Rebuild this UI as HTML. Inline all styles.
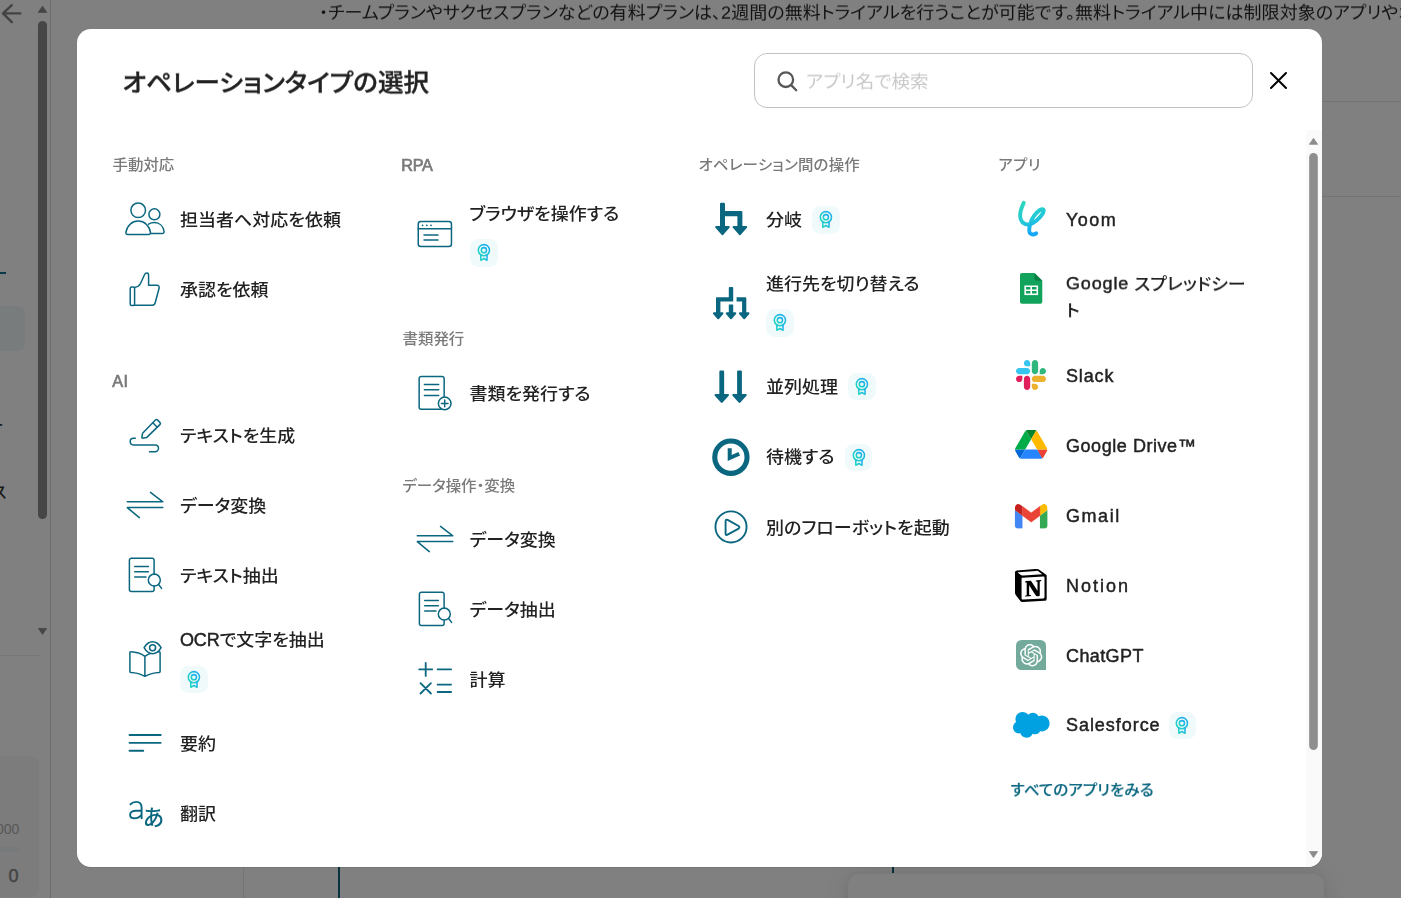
<!DOCTYPE html>
<html lang="ja">
<head>
<meta charset="utf-8">
<title>オペレーションタイプの選択</title>
<style>
*{box-sizing:border-box;margin:0;padding:0}
html,body{width:1401px;height:898px;overflow:hidden}
body{position:relative;background:#808080;font-family:"Liberation Sans","Noto Sans CJK JP",sans-serif;font-feature-settings:"palt";color:#222}
.abs{position:absolute}
svg{display:block;overflow:visible;position:absolute}
/* ---------- dimmed background page ---------- */
#topwrap{left:0;top:0;width:0;height:0;will-change:transform}
#toptext{left:319px;top:-1px;transform:scaleY(.94);transform-origin:50% 50%;white-space:nowrap;font-size:18px;letter-spacing:.05px;line-height:28px;color:#111}
.vline{width:1px;background:#6a6a6a}
.hline{height:1px;background:#747474}
/* ---------- modal ---------- */
#modal{left:77px;top:29px;width:1245px;height:837.5px;background:#fff;border-radius:14px;box-shadow:0 1px 1px rgba(0,0,0,.08);overflow:hidden}
#title{position:absolute;left:122.500px;top:62.500px;font-size:25.600px;line-height:40px;font-weight:500;color:#222;white-space:nowrap;-webkit-text-stroke:.35px #222;transform:scaleY(.95);transform-origin:50% 52%}
#search{left:677px;top:24px;width:499px;height:54.5px;border:1px solid #c2c2c2;border-radius:13px;background:#fff}
#ph{position:absolute;left:806px;top:67.600px;transform:scaleY(.95);transform-origin:50% 52%;font-size:18.500px;line-height:28px;letter-spacing:.1px;color:#c8c8c8;white-space:nowrap}
.hd{position:absolute;margin-top:2px;transform:translateY(-.6px) scaleY(.935);transform-origin:50% 55%;font-size:15.45px;line-height:24px;font-weight:500;color:#7a7a7a;white-space:nowrap}
.it{position:absolute;margin:1.5px 0 0 -.5px;transform:translateY(-.5px) scaleY(.94);transform-origin:50% 14.500px;font-size:18px;line-height:28px;font-weight:500;color:#222;white-space:nowrap}
.la{-webkit-text-stroke:.45px #222;letter-spacing:.85px}
span.la{position:relative;top:-1px;display:inline-block;transform:scaleY(1.064);transform-origin:50% 60%}
div.it.la{margin-top:.5px;transform:none}
div.hd.la{transform:translateY(-1.400px);font-size:16.200px}
.ic{width:40px;height:40px}
.st{fill:none;stroke:#0b6780;stroke-width:1.5;stroke-linecap:round;stroke-linejoin:round}
.fl{fill:#0b6780;stroke:none}
.bd{position:absolute;width:27.500px;height:27.500px;border-radius:8.500px;background:#f0fafb;margin:.25px 0 0 .1px}
.bd svg{left:-.25px;top:-.25px;width:28px;height:28px}
</style>
</head>
<body>
<svg width="0" height="0" style="position:absolute"><defs>
<linearGradient id="rg" x1="0" y1="1" x2="1" y2="0"><stop offset="0" stop-color="#22d8bd"/><stop offset="1" stop-color="#1ea9f5"/></linearGradient>
<linearGradient id="yg" x1="0" y1="0" x2="0.3" y2="1"><stop offset="0" stop-color="#2dd6bd"/><stop offset=".62" stop-color="#22c8d8"/><stop offset="1" stop-color="#14a8f7"/></linearGradient>
</defs></svg>

<!-- background page (dimmed) -->
<div class="abs" id="topwrap"><div class="abs" id="toptext">・チームプランやサクセスプランなどの有料プランは、2週間の無料トライアルを行うことが可能です。無料トライアル中には制限対象のアプリやオペレーションを使用することができます。</div></div>
<div class="abs vline" style="left:50px;top:0;height:898px"></div>
<div class="abs hline" style="left:1322px;top:101px;width:79px"></div>
<div class="abs hline" style="left:1322px;top:196px;width:79px"></div>
<div class="abs hline" style="left:0;top:655px;width:39px;background:#767676"></div>
<div class="abs vline" style="left:243px;top:866px;height:32px;background:#747474"></div>
<div class="abs" style="left:338px;top:866px;width:2px;height:32px;background:#07323f"></div>
<div class="abs" style="left:891.5px;top:866px;width:2px;height:7px;background:#07323f"></div>
<div class="abs" style="left:847.500px;top:873.500px;width:476px;height:60px;border-radius:11px;background:#808080;box-shadow:0 0 26px rgba(0,0,0,.1),0 0 6px rgba(0,0,0,.04)"></div>
<!-- left sidebar fragments -->
<svg style="left:0;top:0" width="52" height="30" viewBox="0 0 52 30"><path d="M20.3 13.4H3M11.8 5.200L3 13.400L11.800 22.200" fill="none" stroke="#434343" stroke-width="2.400" stroke-linecap="round" stroke-linejoin="round"/><path d="M42.5 6.2L46.8 12.4H38.2Z" fill="#464646" stroke="#464646" stroke-width="0.8" stroke-linejoin="round"/></svg>
<div class="abs" style="left:38px;top:20.5px;width:9px;height:498.5px;border-radius:4.5px;background:#464646"></div>
<svg style="left:36px;top:624px" width="14" height="14" viewBox="0 0 14 14"><path d="M2.4 4.4H10.6L6.500 10.400Z" fill="#464646" stroke="#464646" stroke-width="0.8" stroke-linejoin="round"/></svg>
<div class="abs" style="left:0;top:272px;width:6px;height:2px;background:#0a3a48"></div>
<div class="abs" style="left:-10px;top:306px;width:35px;height:45px;border-radius:8px;background:#787c7d"></div>
<div class="abs" style="left:-12.500px;top:411.500px;font-size:16px;line-height:28px;color:#1a1a1a;font-weight:500">ー</div>
<div class="abs" style="left:-8px;top:478.700px;font-size:16px;line-height:28px;color:#1a1a1a;font-weight:500">ス</div>
<div class="abs" style="left:-10px;top:756px;width:48.500px;height:141px;border-radius:8px;background:#7c7c7c"></div>
<div class="abs" style="left:-4px;top:819px;font-size:14px;line-height:20px;color:#575757">000</div>
<div class="abs" style="left:-10px;top:847px;width:29px;height:5px;border-radius:2.5px;background:#767a7b"></div>
<div class="abs" style="left:8.500px;top:861.500px;font-size:18px;line-height:28px;color:#444;-webkit-text-stroke:.5px #444">0</div>

<!-- modal -->
<div class="abs" id="modal">
  <div class="abs" id="search">
    <svg style="left:20.500px;top:15.500px" width="24" height="24" viewBox="0 0 24 24"><circle cx="9.800" cy="9.700" r="7.300" fill="none" stroke="#585858" stroke-width="2.300"/><path d="M15.200 15.100L20.200 20.200" stroke="#585858" stroke-width="2.300" stroke-linecap="round"/></svg>
  </div>
  <svg style="left:1192.100px;top:41.900px" width="19" height="19" viewBox="0 0 19 19"><path d="M2 2L17 17M17 2L2 17" stroke="#000" stroke-width="2" stroke-linecap="round"/></svg>
  <!-- modal scrollbar -->
  <div class="abs" style="left:1229px;top:101px;width:16px;height:737px;background:#fafafa"></div>
  <svg style="left:1229px;top:101px" width="16" height="732" viewBox="0 0 16 732"><path d="M7.500 8.300L11.600 14.300H3.400Z" fill="#8c8c8c" stroke="#8c8c8c" stroke-width="0.800" stroke-linejoin="round"/><rect x="3.200" y="23" width="8.600" height="597" rx="4.300" fill="#8e8e8e"/><path d="M3.400 721.600H11.600L7.500 727.600Z" fill="#8c8c8c" stroke="#8c8c8c" stroke-width="0.800" stroke-linejoin="round"/></svg>

  <div class="abs" id="m" style="left:-77px;top:-29px;width:0;height:0;will-change:transform">
    <div id="title">オペレーションタイプの選択</div>
    <div id="ph">アプリ名で検索</div>
    <!-- ===== column 1 ===== -->
    <div class="hd" style="left:112.500px;top:152px">手動対応</div>

    <svg class="ic st" style="left:125px;top:199px" viewBox="0 0 40 40"><circle cx="13.200" cy="11.300" r="7.300"/><circle cx="29.400" cy="15.300" r="5.500"/><path d="M2.600 35.400C1.400 35.400.700 34.500.900 33.400C2 26.600 7 22.100 13.200 22.100C19.400 22.100 24.400 26.600 25.500 33.400C25.700 34.500 25 35.400 23.800 35.400Z"/><path d="M23.600 25.200C25.100 24.200 27 23.600 29.400 23.600C34.400 23.600 38.200 27 39 32.400C39.200 33.600 38.500 34.500 37.300 34.500H25.900"/></svg>
    <div class="it" style="left:180.500px;top:205px">担当者へ対応を依頼</div>

    <svg class="ic st" style="left:125px;top:269px" viewBox="0 0 40 40"><rect x="5.200" y="18.100" width="4.400" height="18.500" rx="1.500"/><path d="M9.600 18.500C12.500 18 14.500 16.500 15.500 14.500L19.600 5.500C20.200 4.200 21.200 4 22 4C23.300 4 23.600 5.200 23.600 6.500V16.200H32C33.600 16.200 34.500 17.600 34.100 19.200L30.200 33.800C29.800 35.300 28.800 36.200 27.300 36.200H9.600"/></svg>
    <div class="it" style="left:180.500px;top:275px">承認を依頼</div>

    <div class="hd la" style="left:112.200px;top:368px;letter-spacing:.6px;-webkit-text-stroke:.7px #7a7a7a">AI</div>

    <svg class="ic st" style="left:125px;top:415px" viewBox="0 0 40 40"><path d="M16.900 22L17.600 18.200L30.400 5.100Q31.500 4 32.600 5.100L34.900 7.400Q36 8.500 34.900 9.600L21.800 22.400L18 23.100Q16.700 23.300 16.900 22Z"/><path d="M27.800 7.700L32.300 12.200"/><path d="M10.300 23.300H8.500A3.300 3.300 0 0 0 8.500 29.900H30.100A3.400 3.400 0 0 1 30.100 36.700H24.500"/></svg>
    <div class="it" style="left:180.500px;top:421px">テキストを生成</div>

    <svg class="ic st" style="left:125px;top:485px" viewBox="0 0 40 40"><path d="M2.300 16.800H37.800L25.500 7.400M37.800 22.600H2.300L14.300 32.600"/></svg>
    <div class="it" style="left:180.500px;top:491px">データ変換</div>

    <svg class="ic st" style="left:125px;top:555px" viewBox="0 0 40 40"><path d="M29.100 19.500V5.200A2 2 0 0 0 27.100 3.200H6.400A2 2 0 0 0 4.400 5.200V34.400A2 2 0 0 0 6.400 36.400H27.100A2 2 0 0 0 29.100 34.400V31.200"/><path d="M9.700 11.400H23.400M9.700 16.700H23.400M9.700 22.100H21"/><circle cx="29.300" cy="25.100" r="6"/><path d="M33.600 29.500L36.600 33.400"/></svg>
    <div class="it" style="left:180.500px;top:561px">テキスト抽出</div>

    <svg class="ic st" style="left:125px;top:639px" viewBox="0 0 40 40"><path d="M19.900 17.300C16 14.500 10.500 13 5.700 12.800C5.200 12.800 4.900 13.100 4.900 13.600V32.600C4.900 33.100 5.200 33.400 5.700 33.400C10.500 33.600 16 35 19.900 37.300C24 35 29.500 33.600 34.300 33.400C34.800 33.400 35.100 33.100 35.100 32.600V13.600C35.100 13.100 34.800 12.800 34.300 12.800C29.500 13 24 14.500 19.900 17.300V37.300"/><path d="M19.100 8.700C21.500 4.500 24.500 2.700 27.600 2.700C30.700 2.700 33.700 4.500 36.100 8.700C33.700 12.900 30.700 14.700 27.600 14.700C24.500 14.700 21.500 12.900 19.100 8.700Z" fill="#fff"/><circle cx="27.600" cy="8.700" r="3"/></svg>
    <div class="it" style="left:180.500px;top:625px"><span class="la" style="letter-spacing:-.15px;top:0">OCR</span>で文字を抽出</div>
    <div class="bd" style="left:180px;top:665.500px"><svg viewBox="0 0 28 28"><g fill="none" stroke="url(#rg)" stroke-width="1.55" stroke-linejoin="round" stroke-linecap="round"><circle cx="13.9" cy="11.2" r="5.6"/><circle cx="13.9" cy="11.2" r="2.6"/><path d="M10.8 16.2V21.3L13.9 19.5L17 21.3V16.2"/></g></svg></div>

    <svg class="ic st" style="left:125px;top:723px;stroke-width:1.850" viewBox="0 0 40 40"><path d="M4.500 12H35.700M4.500 19.800H35.700M4.500 27.700H18.300"/></svg>
    <div class="it" style="left:180.500px;top:729px">要約</div>

    <svg class="ic st" style="left:125px;top:793px;stroke-width:1.900" viewBox="0 0 40 40"><path d="M5.400 11.400C6.800 9.800 8.900 8.900 11.300 8.900C14.900 8.900 16.600 11.200 16.600 14.800V25.300M16.600 17.700H11C7.500 17.700 5.100 19.100 5.100 21.700C5.100 24 6.900 25.300 9.500 25.300C12.500 25.300 15.100 23.800 16.600 21.500"/><text x="28.600" y="32" text-anchor="middle" font-size="21.500" font-weight="500" style="fill:#0b6780;stroke:none;font-family:'Liberation Sans','Noto Sans CJK JP',sans-serif">あ</text></svg>
    <div class="it" style="left:180.500px;top:799px">翻訳</div>

    <!-- ===== column 2 ===== -->
    <div class="hd la" style="left:401.300px;top:152px;letter-spacing:-.25px;-webkit-text-stroke:.7px #7a7a7a">RPA</div>

    <svg class="ic st" style="left:415px;top:213.750px" viewBox="0 0 40 40"><rect x="3.250" y="7.400" width="33.200" height="25.200" rx="2.500"/><path d="M3.250 14.650H36.450M9 21H23M9 26H23"/><g class="fl"><circle cx="7.600" cy="11.350" r=".900"/><circle cx="11.800" cy="11.350" r=".900"/><circle cx="16" cy="11.350" r=".900"/></g></svg>
    <div class="it" style="left:469.750px;top:199.750px">ブラウザを操作する</div>
    <div class="bd" style="left:470px;top:238.900px"><svg viewBox="0 0 28 28"><g fill="none" stroke="url(#rg)" stroke-width="1.55" stroke-linejoin="round" stroke-linecap="round"><circle cx="13.9" cy="11.2" r="5.6"/><circle cx="13.9" cy="11.2" r="2.6"/><path d="M10.8 16.2V21.3L13.9 19.5L17 21.3V16.2"/></g></svg></div>

    <div class="hd" style="left:402.500px;top:326px">書類発行</div>

    <svg class="ic st" style="left:415px;top:373px" viewBox="0 0 40 40"><path d="M29.150 23.800V5.450A2 2 0 0 0 27.150 3.450H6.150A2 2 0 0 0 4.150 5.450V34.350A2 2 0 0 0 6.150 36.350H26"/><path d="M9.400 11.500H23.700M9.400 16.850H23.700M9.400 22.400H23.700"/><circle cx="29.700" cy="30.400" r="6.300"/><path d="M26.400 30.400H33M29.700 27.100V33.700"/></svg>
    <div class="it" style="left:470px;top:379px">書類を発行する</div>

    <div class="hd" style="left:402.500px;top:473px">データ操作・変換</div>

    <svg class="ic st" style="left:415px;top:519px" viewBox="0 0 40 40"><path d="M2.300 16.800H37.800L25.500 7.400M37.800 22.600H2.300L14.300 32.600"/></svg>
    <div class="it" style="left:470px;top:525px">データ変換</div>

    <svg class="ic st" style="left:415px;top:589px" viewBox="0 0 40 40"><path d="M29.100 19.500V5.200A2 2 0 0 0 27.100 3.200H6.400A2 2 0 0 0 4.400 5.200V34.400A2 2 0 0 0 6.400 36.400H27.100A2 2 0 0 0 29.100 34.400V31.200"/><path d="M9.700 11.400H23.400M9.700 16.700H23.400M9.700 22.100H21"/><circle cx="29.300" cy="25.100" r="6"/><path d="M33.600 29.500L36.600 33.400"/></svg>
    <div class="it" style="left:470px;top:595px">データ抽出</div>

    <svg class="ic st" style="left:415px;top:659px;stroke-width:1.800" viewBox="0 0 40 40"><path d="M4.200 10.400H17.200M10.700 3.900V16.900M22.600 10.400H36.100M5.500 24.100L15.900 34.500M15.900 24.100L5.500 34.500M22.600 25.600H36.100M22.600 33H36.100"/></svg>
    <div class="it" style="left:470px;top:665px">計算</div>
    <!-- ===== column 3 ===== -->
    <div class="hd" style="left:698.500px;top:152px;letter-spacing:.22px">オペレーション間の操作</div>

    <svg class="ic fl" style="left:711px;top:199px" viewBox="0 0 40 40"><path d="M9 5A1.200 1.200 0 0 1 10.200 3.800H12.800A1.200 1.200 0 0 1 14 5V12H30.200A1.200 1.200 0 0 1 31.400 13.200V28.500H26.400V17.200H14V28.500H9Z"/><path d="M5.300 28.100H17.600L11.450 35.100ZM22.750 28.100H35.050L28.900 35.100Z" stroke="#0b6780" stroke-width="2.300" stroke-linejoin="round"/></svg>
    <div class="it" style="left:766.500px;top:205px">分岐</div>
    <div class="bd" style="left:812px;top:206px"><svg viewBox="0 0 28 28"><g fill="none" stroke="url(#rg)" stroke-width="1.55" stroke-linejoin="round" stroke-linecap="round"><circle cx="13.9" cy="11.2" r="5.6"/><circle cx="13.9" cy="11.2" r="2.6"/><path d="M10.8 16.2V21.3L13.9 19.5L17 21.3V16.2"/></g></svg></div>

    <svg class="ic fl" style="left:711px;top:283px" viewBox="0 0 40 40"><path d="M17.800 5A1 1 0 0 1 18.800 4H21.200A1 1 0 0 1 22.200 5V18.500H9.400V30.500H5V15.300A1 1 0 0 1 6 14.300H17.800ZM25.600 14.300H34.300A1 1 0 0 1 35.300 15.300V30.500H31.100V18.500H25.600ZM17.800 21.600H22.200V30.500H17.800Z"/><path d="M2.900 30.300H11.500L7.200 35.300ZM15.700 30.300H24.300L20 35.300ZM28.900 30.300H37.500L33.200 35.300Z" stroke="#0b6780" stroke-width="1.900" stroke-linejoin="round"/></svg>
    <div class="it" style="left:766.500px;top:269px">進行先を切り替える</div>
    <div class="bd" style="left:766px;top:309px"><svg viewBox="0 0 28 28"><g fill="none" stroke="url(#rg)" stroke-width="1.55" stroke-linejoin="round" stroke-linecap="round"><circle cx="13.9" cy="11.2" r="5.6"/><circle cx="13.9" cy="11.2" r="2.6"/><path d="M10.8 16.2V21.3L13.9 19.5L17 21.3V16.2"/></g></svg></div>

    <svg class="ic fl" style="left:711px;top:366px" viewBox="0 0 40 40"><path d="M8.350 5.600A1 1 0 0 1 9.350 4.600H12.150A1 1 0 0 1 13.150 5.600V30H8.350ZM26.100 5.600A1 1 0 0 1 27.100 4.600H29.900A1 1 0 0 1 30.900 5.600V30H26.100Z"/><path d="M4.600 29H16.900L10.750 35.800ZM22.350 29H34.650L28.500 35.800Z" stroke="#0b6780" stroke-width="2.200" stroke-linejoin="round"/></svg>
    <div class="it" style="left:766.500px;top:372px">並列処理</div>
    <div class="bd" style="left:848px;top:372.500px"><svg viewBox="0 0 28 28"><g fill="none" stroke="url(#rg)" stroke-width="1.55" stroke-linejoin="round" stroke-linecap="round"><circle cx="13.9" cy="11.2" r="5.6"/><circle cx="13.9" cy="11.2" r="2.6"/><path d="M10.8 16.2V21.3L13.9 19.5L17 21.3V16.2"/></g></svg></div>

    <svg class="ic" style="left:711px;top:436px" viewBox="0 0 40 40"><circle cx="19.900" cy="21.200" r="16.150" fill="none" stroke="#0b6780" stroke-width="5.100"/><path d="M16.700 12.200H20.700V18.900L27.400 15.900L29.100 19.600L16.700 25.100Z" fill="#0b6780"/></svg>
    <div class="it" style="left:766.500px;top:442.500px">待機する</div>
    <div class="bd" style="left:844.700px;top:443.500px"><svg viewBox="0 0 28 28"><g fill="none" stroke="url(#rg)" stroke-width="1.55" stroke-linejoin="round" stroke-linecap="round"><circle cx="13.9" cy="11.2" r="5.6"/><circle cx="13.9" cy="11.2" r="2.6"/><path d="M10.8 16.2V21.3L13.9 19.5L17 21.3V16.2"/></g></svg></div>

    <svg class="ic st" style="left:711px;top:507px;stroke-width:1.900" viewBox="0 0 40 40"><circle cx="20" cy="19.900" r="15.550"/><path d="M14.600 14.200V26.400Q14.600 28.700 16.600 27.600L27.600 21.600Q29.200 20.300 27.600 19L16.600 12.900Q14.600 11.900 14.600 14.200Z"/></svg>
    <div class="it" style="left:766.500px;top:513px">別のフローボットを起動</div>

    <!-- ===== column 4 ===== -->
    <div class="hd" style="left:998.200px;top:152px;letter-spacing:.5px">アプリ</div>

    <svg class="ic" style="left:1011px;top:199px" viewBox="0 0 40 40"><path d="M12.700 3.800C10.500 8.500 9 13.500 9.100 17C9.300 22 12.500 25.300 17.800 25.800C22.500 24.500 29 19.500 32.200 13.800C33.400 11.500 32.600 10 31 10.200C27.600 10.700 22.600 16.400 20.500 21.200C18.800 25.500 17.800 30 18.500 33C19.300 35.800 22.500 36.200 25.200 34.300" fill="none" stroke="url(#yg)" stroke-width="3.900" stroke-linecap="round" stroke-linejoin="round"/></svg>
    <div class="it la" style="left:1066.500px;top:205px;letter-spacing:1.45px">Yoom</div>

    <svg style="left:1019.800px;top:273.400px" width="22.300" height="30.700" viewBox="0 0 22.300 30.700"><path d="M2 0H14.500L22.300 7.800V28.700A2 2 0 0 1 20.300 30.700H2A2 2 0 0 1 0 28.700V2A2 2 0 0 1 2 0Z" fill="#11a35c"/><path d="M14.500 0L22.300 7.800H16.500A2 2 0 0 1 14.500 5.800Z" fill="#0a7f43"/><rect x="4.400" y="12.500" width="13.700" height="9.600" fill="#fff"/><path d="M6 14.100H10.400V16.500H6ZM12 14.100H16.500V16.500H12ZM6 18.100H10.400V20.500H6ZM12 18.100H16.500V20.500H12Z" fill="#11a35c"/></svg>
    <div class="it" style="left:1066.500px;top:269px"><span class="la">Google</span> スプレッドシー<br>ト</div>

    <svg style="left:1016px;top:360px" width="30" height="30" viewBox="0 0 122.800 122.800"><path d="M25.800 77.600c0 7.100-5.800 12.900-12.900 12.900S0 84.700 0 77.600s5.800-12.900 12.900-12.900h12.900v12.900zm6.500 0c0-7.100 5.800-12.900 12.900-12.900s12.900 5.800 12.900 12.900v32.300c0 7.100-5.800 12.900-12.900 12.900s-12.900-5.800-12.900-12.900V77.600z" fill="#e01e5a"/><path d="M45.200 25.800c-7.100 0-12.900-5.800-12.900-12.900S38.100 0 45.200 0s12.900 5.800 12.900 12.900v12.900H45.200zm0 6.500c7.100 0 12.900 5.800 12.900 12.900s-5.800 12.900-12.900 12.900H12.900C5.800 58.100 0 52.300 0 45.200s5.800-12.900 12.900-12.900h32.300z" fill="#36c5f0"/><path d="M97 45.200c0-7.100 5.800-12.900 12.900-12.900s12.900 5.800 12.900 12.900-5.800 12.900-12.900 12.900H97V45.200zm-6.500 0c0 7.100-5.800 12.900-12.900 12.900s-12.900-5.800-12.900-12.900V12.900C64.700 5.800 70.500 0 77.600 0s12.900 5.800 12.900 12.900v32.300z" fill="#2eb67d"/><path d="M77.600 97c7.100 0 12.900 5.800 12.900 12.900s-5.800 12.900-12.900 12.900-12.900-5.800-12.900-12.900V97h12.900zm0-6.500c-7.100 0-12.900-5.800-12.900-12.900s5.800-12.900 12.900-12.900h32.300c7.100 0 12.900 5.800 12.900 12.900s-5.800 12.900-12.900 12.900H77.600z" fill="#ecb22e"/></svg>
    <div class="it la" style="left:1066.500px;top:361px">Slack</div>

    <svg style="left:1014.800px;top:430px" width="32.300" height="28.900" viewBox="0 0 87.300 78"><path d="m6.600 66.850 3.850 6.650c.8 1.400 1.950 2.500 3.300 3.300l13.750-23.800h-27.500c0 1.550.4 3.100 1.200 4.500z" fill="#0066da"/><path d="m43.650 25-13.750-23.800c-1.350.8-2.500 1.900-3.300 3.300l-25.400 44a9.060 9.060 0 0 0 -1.200 4.500h27.500z" fill="#00ac47"/><path d="m73.550 76.800c1.350-.8 2.500-1.900 3.300-3.300l1.600-2.750 7.650-13.250c.8-1.400 1.200-2.950 1.200-4.500h-27.502l5.852 11.500z" fill="#ea4335"/><path d="m43.650 25 13.750-23.800c-1.350-.8-2.900-1.200-4.500-1.200h-18.500c-1.600 0-3.150.45-4.500 1.200z" fill="#00832d"/><path d="m59.800 53h-32.300l-13.750 23.800c1.350.8 2.900 1.200 4.500 1.200h50.800c1.600 0 3.150-.45 4.500-1.200z" fill="#2684fc"/><path d="m73.400 26.500-12.700-22c-.8-1.400-1.950-2.500-3.300-3.300l-13.750 23.800 16.150 28h27.450c0-1.550-.4-3.100-1.200-4.500z" fill="#ffba00"/></svg>
    <div class="it la" style="left:1066.500px;top:431px;letter-spacing:.55px">Google Drive™</div>

    <svg style="left:1014.800px;top:503.500px" width="32.300" height="24.200" viewBox="52 42 88 66"><path fill="#4285f4" stroke="#4285f4" stroke-width=".6" d="M58 108h14V74L52 59v43c0 3.320 2.690 6 6 6"/><path fill="#34a853" stroke="#34a853" stroke-width=".6" d="M120 108h14c3.320 0 6-2.690 6-6V59l-20 15"/><path fill="#fbbc04" d="M120 48v26l20-15v-8c0-7.420-8.470-11.650-14.400-7.200"/><path fill="#ea4335" stroke="#ea4335" stroke-width=".8" d="M72 74V48l24 18 24-18v26L96 92"/><path fill="#c5221f" d="M52 51v8l20 15V48l-5.600-4.200c-5.940-4.450-14.400-.22-14.400 7.200"/></svg>
    <div class="it la" style="left:1066.500px;top:501px;letter-spacing:1.55px">Gmail</div>

    <svg style="left:1015.100px;top:568.500px" width="33.100" height="33.100" viewBox="0 0 100 100"><path d="M6.017 4.313l55.333-4.087c6.797-.583 8.543-.19 12.817 2.917l17.663 12.443c2.913 2.140 3.883 2.723 3.883 5.053v68.243c0 4.277-1.553 6.807-6.990 7.193L24.467 99.967c-4.080.193-6.023-.390-8.160-3.113L3.300 79.940c-2.333-3.113-3.300-5.443-3.300-8.167V11.113c0-3.497 1.553-6.413 6.017-6.800z" fill="#fff"/><path fill-rule="evenodd" d="M61.350.227l-55.333 4.087C1.553 4.700 0 7.617 0 11.113v60.660c0 2.723.967 5.053 3.300 8.167l13.007 16.913c2.137 2.723 4.080 3.307 8.160 3.113l64.257-3.890c5.433-.387 6.990-2.917 6.990-7.193V20.640c0-2.210-.873-2.847-3.443-4.733L74.167 3.143c-4.273-3.107-6.020-3.500-12.817-2.917zM25.920 19.523c-5.247.353-6.437.433-9.417-1.990L8.927 11.507c-.770-.780-.383-1.753 1.557-1.947l53.193-3.887c4.467-.390 6.793 1.167 8.540 2.527l9.123 6.610c.390.197 1.360 1.360.193 1.360l-54.933 3.307-.680.047zM19.803 88.300V30.367c0-2.530.777-3.697 3.103-3.893L86 22.780c2.140-.193 3.107 1.167 3.107 3.693v57.547c0 2.530-.390 4.670-3.883 4.863l-60.377 3.500c-3.493.193-5.043-.970-5.043-4.083zm59.600-54.827c.387 1.750 0 3.500-1.750 3.700l-2.910.577v42.773c-2.527 1.360-4.853 2.137-6.797 2.137-3.107 0-3.883-.973-6.210-3.887l-19.030-29.940v28.967l6.020 1.363s0 3.500-4.857 3.500l-13.390.777c-.390-.780 0-2.723 1.357-3.110l3.497-.970v-38.300L30.480 40.667c-.390-1.750.580-4.277 3.300-4.473l14.367-.967 19.800 30.327v-26.830l-5.047-.580c-.390-2.143 1.163-3.700 3.103-3.890l13.400-.780z" fill="#000"/></svg>
    <div class="it la" style="left:1066.500px;top:571px;letter-spacing:2px">Notion</div>

    <div class="abs" style="left:1016.300px;top:640.100px;width:29.500px;height:29.700px;border-radius:5.500px 5.500px 0 5.500px;background:#74aa9c"></div>
    <svg style="left:1019.900px;top:643.600px" width="22.400" height="22.400" viewBox="0 0 24 24"><path fill="#fff" d="M22.2819 9.8211a5.9847 5.9847 0 0 0-.5157-4.9108 6.0462 6.0462 0 0 0-6.5098-2.9A6.0651 6.0651 0 0 0 4.9807 4.1818a5.9847 5.9847 0 0 0-3.9977 2.9 6.0462 6.0462 0 0 0 .7427 7.0966 5.98 5.98 0 0 0 .511 4.9107 6.051 6.051 0 0 0 6.5146 2.9001A5.9847 5.9847 0 0 0 13.2599 24a6.0557 6.0557 0 0 0 5.7718-4.2058 5.9894 5.9894 0 0 0 3.9977-2.9001 6.0557 6.0557 0 0 0-.7475-7.0729zm-9.022 12.6081a4.4755 4.4755 0 0 1-2.8764-1.0408l.1419-.0804 4.7783-2.7582a.7948.7948 0 0 0 .3927-.6813v-6.7369l2.02 1.1686a.071.071 0 0 1 .038.052v5.5826a4.504 4.504 0 0 1-4.4945 4.4944zm-9.6607-4.1254a4.4708 4.4708 0 0 1-.5346-3.0137l.142.0852 4.783 2.7582a.7712.7712 0 0 0 .7806 0l5.8428-3.3685v2.3324a.0804.0804 0 0 1-.0332.0615L9.74 19.9502a4.4992 4.4992 0 0 1-6.1408-1.6464zM2.3408 7.8956a4.485 4.485 0 0 1 2.3655-1.9728V11.6a.7664.7664 0 0 0 .3879.6765l5.8144 3.3543-2.0201 1.1685a.0757.0757 0 0 1-.071 0l-4.8303-2.7865A4.504 4.504 0 0 1 2.3408 7.872zm16.5963 3.8558L13.1038 8.364 15.1192 7.2a.0757.0757 0 0 1 .071 0l4.8303 2.7913a4.4944 4.4944 0 0 1-.6765 8.1042v-5.6772a.79.79 0 0 0-.407-.667zm2.0107-3.0231l-.142-.0852-4.7735-2.7818a.7759.7759 0 0 0-.7854 0L9.409 9.2297V6.8974a.0662.0662 0 0 1 .0284-.0615l4.8303-2.7866a4.4992 4.4992 0 0 1 6.6802 4.66zM8.3065 12.863l-2.02-1.1638a.0804.0804 0 0 1-.038-.0567V6.0742a4.4992 4.4992 0 0 1 7.3757-3.4537l-.142.0805L8.704 5.459a.7948.7948 0 0 0-.3927.6813zm1.0976-2.3654l2.602-1.4998 2.6069 1.4998v2.9994l-2.5974 1.4997-2.6067-1.4997Z"/></svg>
    <div class="it la" style="left:1066.500px;top:641px;letter-spacing:.4px">ChatGPT</div>

    <svg style="left:1012.800px;top:712px" width="36.600" height="25.700" viewBox="0 3.600 24 16.800"><path fill="#00a1e0" d="M10.006 5.415a4.195 4.195 0 0 1 3.045-1.306c1.560 0 2.954.900 3.690 2.205.630-.300 1.350-.450 2.100-.450 2.850 0 5.159 2.340 5.159 5.220s-2.310 5.220-5.176 5.220c-.345 0-.690-.044-1.020-.104a3.750 3.750 0 0 1-3.300 1.950c-.600 0-1.155-.150-1.650-.375A4.314 4.314 0 0 1 8.880 20.400a4.302 4.302 0 0 1-4.050-2.820c-.270.062-.540.076-.825.076-2.204 0-4.005-1.800-4.005-4.050 0-1.500.810-2.800 2.010-3.510-.255-.570-.390-1.200-.390-1.860 0-2.550 2.100-4.636 4.650-4.636 1.530 0 2.850.705 3.720 1.815"/></svg>
    <div class="it la" style="left:1066.500px;top:710.500px;letter-spacing:.95px">Salesforce</div>
    <div class="bd" style="left:1168.500px;top:711.500px"><svg viewBox="0 0 28 28"><g fill="none" stroke="url(#rg)" stroke-width="1.55" stroke-linejoin="round" stroke-linecap="round"><circle cx="13.9" cy="11.2" r="5.6"/><circle cx="13.9" cy="11.2" r="2.6"/><path d="M10.8 16.2V21.3L13.9 19.5L17 21.3V16.2"/></g></svg></div>

    <div class="abs" style="left:1010.700px;top:778.500px;font-size:15.600px;line-height:24px;font-weight:500;color:#0b6780;white-space:nowrap;transform:translateY(-.6px) scaleY(.935);transform-origin:50% 55%;-webkit-text-stroke:.15px #0b6780">すべてのアプリをみる</div>
  </div>
</div>
</body>
</html>
